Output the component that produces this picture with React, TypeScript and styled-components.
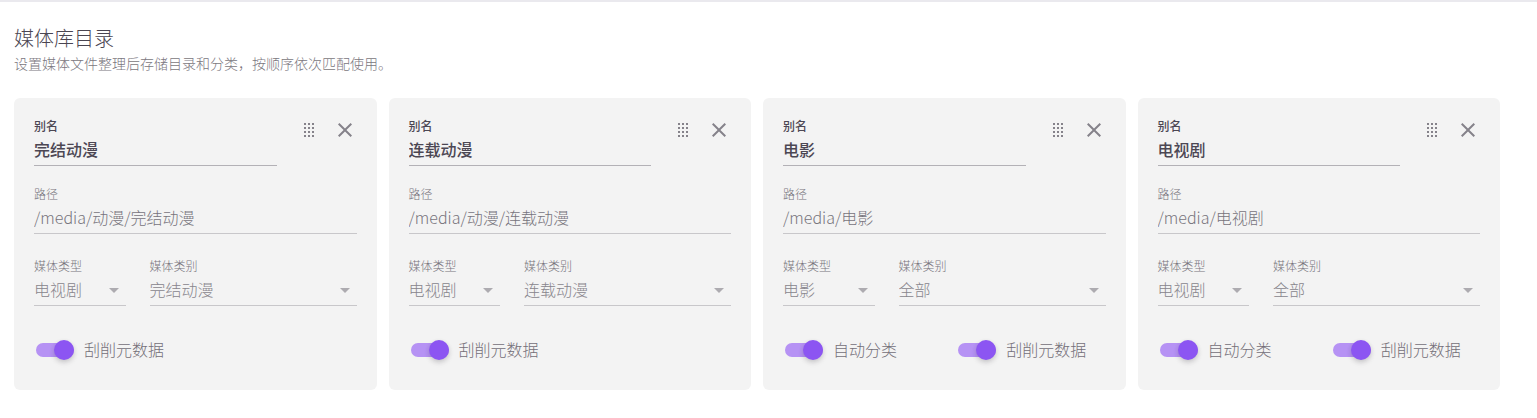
import React, { useId, useState } from "react";
import styled, { createGlobalStyle } from "styled-components";

const GlobalStyle = createGlobalStyle`
  * { box-sizing: border-box; }
  body {
    margin: 0;
    background: #ffffff;
    color: #544f5a;
    font-family: "Noto Sans", "Noto Sans CJK SC", sans-serif;
    font-weight: 300;
  }
  input, select, button { font: inherit; color: inherit; }
`;

const Page = styled.section`
  border-top: 2px solid #eae9ee;
  padding: 24px 37px 28px 14px;
`;

const Title = styled.h2`
  margin: 0;
  font-size: 20px;
  line-height: 26px;
  font-weight: 300;
  color: #4a4551;
`;

const Subtitle = styled.p`
  margin: 2px 0 24px;
  font-size: 14px;
  line-height: 20px;
  color: #7b7780;
`;

const CardGrid = styled.div`
  display: grid;
  grid-template-columns: repeat(4, minmax(0, 1fr));
  gap: 12px;
`;

const Card = styled.article`
  padding: 20px;
  border-radius: 6px;
  background: #f3f3f3;
`;

const CardHeader = styled.div`
  display: flex;
  gap: 14px;
  margin-bottom: 20px;
`;

const Actions = styled.div`
  display: flex;
  height: 36px;
  margin: -6px -6px 0 0;
`;

const IconButton = styled.button`
  display: grid;
  place-items: center;
  width: 36px;
  height: 36px;
  padding: 0;
  border: 0;
  border-radius: 50%;
  background: none;
  color: #85828a;
  cursor: pointer;
`;

const FieldBox = styled.div<{ $strong?: boolean }>`
  display: flex;
  flex: 1;
  flex-direction: column;
  min-width: 0;
  height: 48px;
  border-bottom: 1px solid ${(p) => (p.$strong ? "#b3b1b6" : "#c8c7ca")};
  color: ${(p) => (p.$strong ? "#4c4753" : "#77737c")};
  font-weight: ${(p) => (p.$strong ? 500 : 300)};
`;

const FieldLabel = styled.label`
  font-size: 12px;
  line-height: 18px;
`;

const TextInput = styled.input`
  width: 100%;
  height: 22px;
  margin-top: 2px;
  padding: 0;
  border: 0;
  outline: 0;
  background: none;
  font-family: "Noto Sans CJK SC", sans-serif;
  font-size: 16px;
  line-height: 22px;
`;

const SelectWrap = styled.div`
  display: grid;
  grid-template-columns: minmax(0, 1fr) 24px;
  align-items: center;
  height: 24px;
  margin-top: 2px;
  color: #88858c;

  svg { grid-area: 1 / 2; pointer-events: none; }
`;

const Select = styled.select`
  grid-area: 1 / 1 / 2 / 3;
  width: 100%;
  height: 24px;
  padding: 0;
  border: 0;
  outline: 0;
  appearance: none;
  background: none;
  font-size: 16px;
  line-height: 24px;
`;

const SelectRow = styled.div`
  display: grid;
  grid-template-columns: repeat(3, minmax(0, 1fr));
  gap: 24px;
  margin-top: 24px;

  > :last-child { grid-column: span 2; }
`;

const SwitchRow = styled.div`
  display: grid;
  grid-template-columns: repeat(2, minmax(0, 1fr));
  gap: 24px;
  margin-top: 24px;
`;

const SwitchLabel = styled.label`
  display: flex;
  align-items: center;
  gap: 10px;
  height: 40px;
  padding-left: 2px;
  font-size: 16px;
  line-height: 24px;
  color: #736f78;
  white-space: nowrap;
  cursor: pointer;
`;

const SwitchInput = styled.input`
  appearance: none;
  display: flex;
  align-items: center;
  flex: none;
  width: 38px;
  height: 14px;
  margin: 0;
  border-radius: 7px;
  background: #9e9e9e;
  cursor: pointer;

  &::before {
    content: "";
    width: 20px;
    height: 20px;
    border-radius: 50%;
    background: #ffffff;
    box-shadow: 0 2px 4px rgba(58, 53, 65, 0.18), 0 3px 6px rgba(58, 53, 65, 0.08);
  }
  &:checked { justify-content: flex-end; background: #b692f4; }
  &:checked::before { background: #8c55f2; }
`;

const DragIcon = () => (
  <svg width="20" height="20" viewBox="0 0 20 20" fill="currentColor" shapeRendering="crispEdges" aria-hidden="true">
    {[3, 7, 11, 15].map((y) => [5, 9, 13].map((x) => <rect key={`${x}-${y}`} x={x} y={y} width="2" height="2" />))}
  </svg>
);

const CloseIcon = () => (
  <svg width="24" height="24" viewBox="0 0 24 24" fill="currentColor" aria-hidden="true">
    <path d="M19 6.41 17.59 5 12 10.59 6.41 5 5 6.41 10.59 12 5 17.59 6.41 19 12 13.41 17.59 19 19 17.59 13.41 12z" />
  </svg>
);

const CaretIcon = () => (
  <svg width="24" height="24" viewBox="0 0 24 24" fill="#adabb0" aria-hidden="true">
    <path d="m7 10 5 5 5-5z" />
  </svg>
);

function TextField({ label, value, strong }: { label: string; value: string; strong?: boolean }) {
  const id = useId();
  return (
    <FieldBox $strong={strong}>
      <FieldLabel htmlFor={id}>{label}</FieldLabel>
      <TextInput id={id} type="text" defaultValue={value} />
    </FieldBox>
  );
}

function SelectField({ label, value, options }: { label: string; value: string; options: string[] }) {
  const id = useId();
  return (
    <FieldBox>
      <FieldLabel htmlFor={id}>{label}</FieldLabel>
      <SelectWrap>
        <Select id={id} defaultValue={value}>
          {options.map((o) => (
            <option key={o}>{o}</option>
          ))}
        </Select>
        <CaretIcon />
      </SelectWrap>
    </FieldBox>
  );
}

function Switch({ label }: { label: string }) {
  const [on, setOn] = useState(true);
  return (
    <SwitchLabel>
      <SwitchInput type="checkbox" role="switch" checked={on} onChange={() => setOn(!on)} />
      {label}
    </SwitchLabel>
  );
}

interface Directory {
  name: string;
  path: string;
  type: string;
  category: string;
}

const directories: Directory[] = [
  { name: "完结动漫", path: "/media/动漫/完结动漫", type: "电视剧", category: "完结动漫" },
  { name: "连载动漫", path: "/media/动漫/连载动漫", type: "电视剧", category: "连载动漫" },
  { name: "电影", path: "/media/电影", type: "电影", category: "全部" },
  { name: "电视剧", path: "/media/电视剧", type: "电视剧", category: "全部" },
];

function DirectoryCard({ name, path, type, category }: Directory) {
  return (
    <Card>
      <CardHeader>
        <TextField label="别名" value={name} strong />
        <Actions>
          <IconButton type="button" aria-label="拖动排序"><DragIcon /></IconButton>
          <IconButton type="button" aria-label="删除"><CloseIcon /></IconButton>
        </Actions>
      </CardHeader>
      <TextField label="路径" value={path} />
      <SelectRow>
        <SelectField label="媒体类型" value={type} options={["电影", "电视剧"]} />
        <SelectField label="媒体类别" value={category} options={["全部", "完结动漫", "连载动漫"]} />
      </SelectRow>
      <SwitchRow>
        {category === "全部" && <Switch label="自动分类" />}
        <Switch label="刮削元数据" />
      </SwitchRow>
    </Card>
  );
}

export default function App() {
  return (
    <>
      <GlobalStyle />
      <Page>
        <Title>媒体库目录</Title>
        <Subtitle>设置媒体文件整理后存储目录和分类，按顺序依次匹配使用。</Subtitle>
        <CardGrid>
          {directories.map((d) => (
            <DirectoryCard key={d.name} {...d} />
          ))}
        </CardGrid>
      </Page>
    </>
  );
}
